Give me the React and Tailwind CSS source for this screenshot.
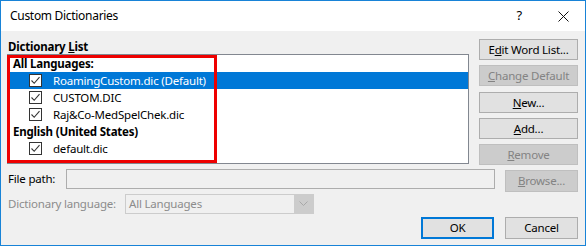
import React from "react";

const font = { fontFamily: '"Noto Sans", "Liberation Sans", sans-serif' };

function Check() {
  return (
    <span className="w-[13px] h-[13px] border border-[#333333] bg-white flex items-center justify-center shrink-0">
      <svg width="11" height="11" viewBox="0 0 11 11">
        <path d="M1.5 5.5 L4.2 8.3 L9.5 2.2" fill="none" stroke="#333333" strokeWidth="1.1" />
      </svg>
    </span>
  );
}

function Btn({ children, disabled, primary, className = "" }) {
  return (
    <div
      className={`h-[21px] flex items-center justify-center text-[11.5px] tracking-[-0.2px] ${
        disabled
          ? "bg-[#cccccc] border border-[#bfbfbf] text-[#838383]"
          : primary
            ? "bg-[#e1e1e1] border-2 border-[#0078d7] text-black"
            : "bg-[#e1e1e1] border border-[#adadad] text-black"
      } ${className}`}
    >
      {children}
    </div>
  );
}

const items = [
  { type: "group", label: "All Languages:" },
  { type: "item", label: "RoamingCustom.dic (Default)", selected: true },
  { type: "item", label: "CUSTOM.DIC" },
  { type: "item", label: "Raj&Co-MedSpelChek.dic" },
  { type: "group", label: "English (United States)" },
  { type: "item", label: "default.dic" },
];

export default function App() {
  return (
    <div style={font} className="w-[586px] h-[246px] border border-[#1883d7] flex flex-col bg-[#f0f0f0] text-black text-[11.5px] tracking-[-0.2px]">
      {/* Title bar */}
      <div className="h-[30px] bg-white flex items-center shrink-0">
        <span className="ml-[9px] text-[12px] tracking-[-0.3px]">Custom Dictionaries</span>
        <span className="ml-auto text-[13px] mr-[36px]">?</span>
        <svg width="11" height="11" viewBox="0 0 11 11" className="mr-[16px]">
          <path d="M0.5 0.5 L10.5 10.5 M10.5 0.5 L0.5 10.5" stroke="#111" strokeWidth="1" />
        </svg>
      </div>

      <div className="flex-1 pl-[6px] pr-[7px] pt-[8px] relative">
        {/* Dictionary list + buttons */}
        <div className="flex">
          <div className="w-[462px] flex flex-col">
            <div className="h-[15px] font-bold leading-[15px] pl-[1px]">
              Dictionary <span className="underline">L</span>ist
            </div>
            <div className="h-[110px] border border-[#828790] bg-white relative">
              {items.map((it, i) =>
                it.type === "group" ? (
                  <div key={i} className="h-[17px] flex items-center pl-[5px] font-bold">
                    {it.label}
                  </div>
                ) : (
                  <div
                    key={i}
                    className={`h-[17px] flex items-center pl-[21px] ${
                      it.selected ? "bg-[#0078d7] text-white" : ""
                    }`}
                  >
                    <Check />
                    <span className="ml-[11px]">{it.label}</span>
                  </div>
                )
              )}
              {/* red annotation */}
              <div className="absolute left-[-1px] top-[0px] w-[210px] h-[108px] border-[3px] border-[#ee0000]" />
            </div>
          </div>
          <div className="ml-[10px] w-[99px] flex flex-col gap-[5px]">
            <Btn>
              E<span className="underline">d</span>it Word List...
            </Btn>
            <Btn disabled>
              <span className="underline">C</span>hange Default
            </Btn>
            <Btn className="mt-[1px]">
              <span className="underline">N</span>ew...
            </Btn>
            <Btn>
              <span className="underline">A</span>dd...
            </Btn>
            <Btn disabled>
              <span className="underline">R</span>emove
            </Btn>
          </div>
        </div>

        {/* File path */}
        <div className="flex items-start mt-[4px]">
          <div className="h-[20px] flex items-center pl-[1px] w-[59px]">File path:</div>
          <div className="w-[429px] h-[20px] border border-[#adadad] bg-[#f0f0f0]" />
          <Btn disabled className="ml-[10px] w-[73px] mt-[1px] h-[22px]">
            <span className="underline">B</span>rowse...
          </Btn>
        </div>

        {/* Dictionary language */}
        <div className="flex items-center mt-[2px]">
          <div className="w-[118px] pl-[1px] text-[#8c8c8c]">
            Dictionary lan<span className="underline">g</span>uage:
          </div>
          <div className="w-[189px] h-[20px] border border-[#cccccc] bg-[#f0f0f0] flex items-center">
            <span className="pl-[3px] text-[#8c8c8c] flex-1">All Languages</span>
            <div className="w-[19px] h-[18px] bg-[#cccccc] flex items-center justify-center">
              <svg width="9" height="6" viewBox="0 0 9 6">
                <path d="M0.5 0.5 L4.5 4.5 L8.5 0.5" fill="none" stroke="#a8a8a8" strokeWidth="1" />
              </svg>
            </div>
          </div>
        </div>

        {/* OK / Cancel */}
        <div className="flex justify-end mt-[3px]">
          <Btn primary className="w-[73px] h-[22px]">OK</Btn>
          <Btn className="ml-[11px] w-[73px] h-[22px]">Cancel</Btn>
        </div>
      </div>
    </div>
  );
}
